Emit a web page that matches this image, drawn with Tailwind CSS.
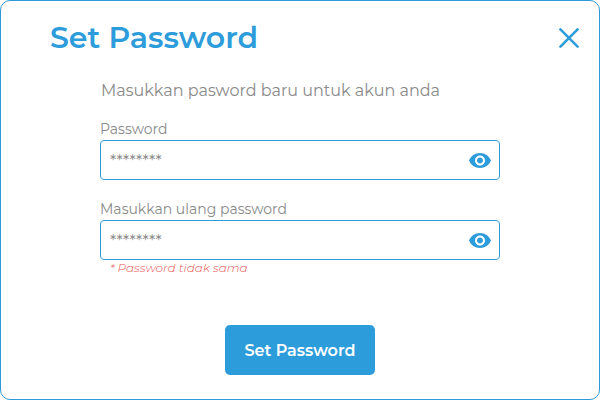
<!DOCTYPE html>
<html lang="id">
<head>
<meta charset="utf-8">
<title>Set Password</title>
<script src="https://cdn.jsdelivr.net/npm/@tailwindcss/browser@4"></script>
</head>
<body class="bg-white">
<main class="flex h-[400px] w-[600px] flex-col overflow-hidden rounded-[10px] border border-[#2d9cdb] bg-white font-[Montserrat,Inter,sans-serif] text-[#8a8a8a] antialiased">
  <header class="flex h-[74px] items-center justify-between pr-5 pl-[49px]">
    <h1 class="text-[30px] leading-9 font-semibold whitespace-nowrap text-[#2d9cdb]">Set Password</h1>
    <button aria-label="Tutup" class="text-[#2d9cdb]">
      <svg class="block size-5" viewBox="0 0 20 20" fill="none" stroke="currentColor" stroke-width="2.5" stroke-linecap="round"><path d="M1.4 1.4 18.6 18.6M18.6 1.4 1.4 18.6"/></svg>
    </button>
  </header>
  <form class="mx-[99px] flex flex-col">
    <p class="mt-[6px] h-5 pl-px text-[16px] leading-5 whitespace-nowrap">Masukkan pasword baru untuk akun anda</p>
    <label class="mt-[18px] h-[21px] text-[14px] leading-5 whitespace-nowrap">Password</label>
    <div class="flex h-10 items-center justify-between rounded-[4px] border border-[#2d9cdb] pr-2 pl-[9px]">
      <span class="pt-1 text-[16px] leading-5">********</span>
      <svg class="block h-[15px] w-[22px] text-[#2d9cdb]" viewBox="1 4.5 22 15" fill="currentColor"><path d="M12 4.5C7 4.5 2.73 7.61 1 12c1.73 4.39 6 7.5 11 7.5s9.27-3.11 11-7.5c-1.73-4.39-6-7.5-11-7.5zM12 17c-2.76 0-5-2.24-5-5s2.24-5 5-5 5 2.24 5 5-2.24 5-5 5zm0-8c-1.66 0-3 1.34-3 3s1.34 3 3 3 3-1.34 3-3-1.34-3-3-3z"/></svg>
    </div>
    <label class="mt-[19px] h-[21px] text-[14px] leading-5 whitespace-nowrap">Masukkan ulang password</label>
    <div class="flex h-10 items-center justify-between rounded-[4px] border border-[#2d9cdb] pr-2 pl-[9px]">
      <span class="pt-1 text-[16px] leading-5">********</span>
      <svg class="block h-[15px] w-[22px] text-[#2d9cdb]" viewBox="1 4.5 22 15" fill="currentColor"><path d="M12 4.5C7 4.5 2.73 7.61 1 12c1.73 4.39 6 7.5 11 7.5s9.27-3.11 11-7.5c-1.73-4.39-6-7.5-11-7.5zM12 17c-2.76 0-5-2.24-5-5s2.24-5 5-5 5 2.24 5 5-2.24 5-5 5zm0-8c-1.66 0-3 1.34-3 3s1.34 3 3 3 3-1.34 3-3-1.34-3-3-3z"/></svg>
    </div>
    <p class="h-4 pl-[10px] text-[12px] leading-4 font-light whitespace-nowrap text-[#eb5757] italic">* Password tidak sama</p>
    <button class="mt-[49px] h-[50px] w-[150px] self-center rounded-[5px] bg-[#2d9cdb] pt-0.5 text-[16px] font-semibold whitespace-nowrap text-white">Set Password</button>
  </form>
</main>
</body>
</html>
